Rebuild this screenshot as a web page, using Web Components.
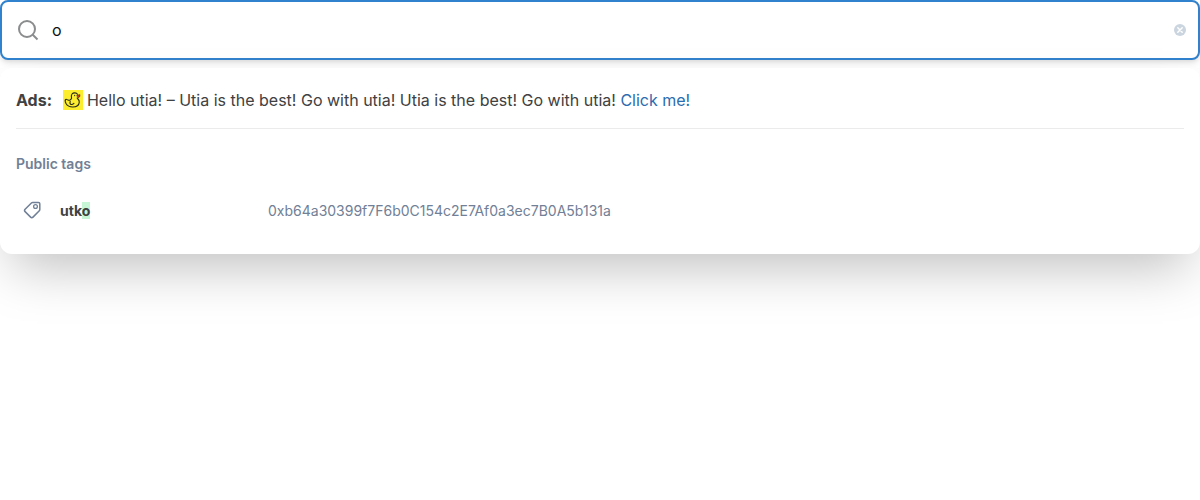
<!DOCTYPE html>
<html lang="en">
<head>
<meta charset="utf-8">
<title>Search</title>
<style>
body { margin: 0; min-height: 100vh; background: #fff; color: #404142; font: 400 16px/24px Inter, "Liberation Sans", sans-serif; }
</style>
</head>
<body>
<search-page></search-page>

<script>
const define = (name, html) => {
  const template = document.createElement('template');
  template.innerHTML = html;
  customElements.define(name, class extends HTMLElement {
    constructor() {
      super();
      this.attachShadow({ mode: 'open' }).append(template.content.cloneNode(true));
    }
  });
};

define('search-input', `
<style>
:host { display: block; }
form { display: flex; align-items: center; box-sizing: border-box; height: 60px; padding: 0 10px 0 14px; margin: 0;
  border: 2px solid #3182ce; border-radius: 8px; background: #fff;
  box-shadow: 0 4px 6px -1px rgba(0,0,0,.1), 0 2px 4px -1px rgba(0,0,0,.06); }
svg { display: block; flex: none; }
input { flex: 1; min-width: 0; border: 0; outline: 0; padding: 0; margin: 0 12px; height: 24px; background: none; color: #101112; font: inherit; }
button { border: 0; padding: 0; background: none; cursor: pointer; }
</style>
<form role="search">
  <svg width="24" height="24" viewBox="0 0 24 24" fill="none" stroke="#8b8c8d" stroke-width="2"><circle cx="11" cy="11" r="8"/><path d="m16.500 16.500 5 5"/></svg>
  <input type="text" value="o" aria-label="Search">
  <button type="button" aria-label="Clear search"><svg width="16" height="16" viewBox="0 0 16 16"><circle cx="8" cy="8" r="6" fill="#cbd5e0"/><path d="m5.800 5.800 4.400 4.400m0-4.400-4.400 4.400" stroke="#fff" stroke-width="1.500" stroke-linecap="round"/></svg></button>
</form>`);

define('result-panel', `
<style>
:host { display: block; box-sizing: border-box; padding: 20px 16px; border-radius: 12px; background: #fff; box-shadow: 0 25px 50px -12px rgba(0,0,0,.25); }
</style>
<slot></slot>`);

define('text-ad', `
<style>
:host { display: block; padding-bottom: 16px; border-bottom: 1px solid #ebebeb; }
p { display: flex; align-items: center; margin: 0; }
strong { margin-right: 11px; font-weight: 700; }
svg { margin-right: 4px; flex: none; }
a { color: #2b6cb0; text-decoration: none; }
</style>
<p><strong>Ads:</strong>
<svg width="20" height="20" viewBox="0 0 20 20" fill="none" stroke-linecap="round" stroke-linejoin="round"><path fill="#fcee2f" d="M0 0h20v20H0z"/><path stroke="#252819" stroke-width="1.100" d="M14.500 4.300C13.500 2.600 10.500 2.300 9 4 7.800 5.400 8.300 7 8.600 8.200 8.200 9.900 6.500 10.500 4.900 10 4 9.700 3.500 8.900 2.700 9.500 1.900 10.200 2.300 12.200 3 13.500 4.400 15.900 6.800 17 9.800 17c3.600 0 6.200-2 6.500-4.900.1-1.700-.9-2.900-2.100-4.100M7.200 11.500c-.5 1.400-.2 2.900 1.100 3 1.200 0 2-.4 2.600-1.100M11.700 5.300v.3"/><path fill="#d6401f" stroke="#522015" stroke-width=".8" d="m14.200 5.300 2.700-.6-.3 2.200-1.400.6z"/></svg>
<span><slot></slot> <a href="#"><slot name="action"></slot></a></span></p>`);

define('result-group', `
<style>
:host { display: block; padding-top: 25px; }
h2 { margin: 0 0 12px; font-size: 14px; line-height: 20px; font-weight: 600; color: #718096; }
</style>
<h2><slot name="title"></slot></h2>
<slot></slot>`);

define('tag-result', `
<style>
:host { display: block; }
a { display: grid; grid-template-columns: 36px 200px minmax(0, 1fr); column-gap: 8px; align-items: end; padding: 14px 0; font-size: 14px; line-height: 18px; color: #718096; text-decoration: none; }
svg { display: block; margin-left: 6px; }
b { color: #404142; }
span { overflow: hidden; text-overflow: ellipsis; }
</style>
<a href="#">
<svg width="20" height="20" viewBox="0 0 20 20" fill="none" stroke="#718096" stroke-width="1.500" stroke-linejoin="round"><path d="M10.800 2.500H16.500q1.300 0 1.300 1.300V9.500q0 .7-.5 1.200l-6.300 6.400q-1.200 1.200-2.400 0l-5.500-5.500q-1.200-1.200 0-2.400l6.300-6.200q.5-.5 1.200-.5Z"/><circle cx="13.500" cy="6.500" r="1.900" stroke-width="1.300"/></svg>
<b><slot name="name"></slot></b><span><slot name="hash"></slot></span></a>`);

define('search-page', `
<style>
:host { display: block; }
result-panel { margin-top: 8px; }
mark { background: #c6f6d5; color: inherit; }
</style>
<search-input></search-input>
<result-panel>
  <text-ad>Hello utia! – Utia is the best! Go with utia! Utia is the best! Go with utia!<span slot="action">Click me!</span></text-ad>
  <result-group><span slot="title">Public tags</span>
    <tag-result><span slot="name">utk<mark>o</mark></span><span slot="hash">0xb64a30399f7F6b0C154c2E7Af0a3ec7B0A5b131a</span></tag-result>
  </result-group>
</result-panel>`);
</script>
</body>
</html>
